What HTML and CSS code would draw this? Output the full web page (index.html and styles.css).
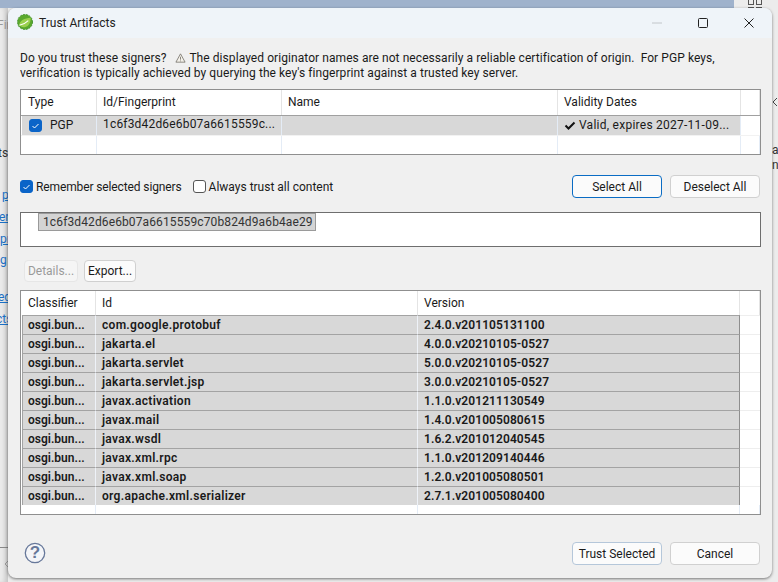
FILE: index.html
```html
<!DOCTYPE html>
<html lang="en">
<head>
<meta charset="utf-8">
<title>Trust Artifacts</title>
<link rel="stylesheet" href="styles.css">
</head>
<body>
<div class="desktop">
  <div class="topband"></div>
  <div class="topright"><span></span><span></span><span></span><span></span></div>
  <div class="behind">
    <span class="bg-text b1">Fin</span>
    <span class="bg-text b2">ts</span>
    <a class="bg-link l1">p</a><a class="bg-link l2">er</a><a class="bg-link l3">pr</a><a class="bg-link l4">g</a><a class="bg-link l5">ed</a><a class="bg-link l6">cts</a>
    <div class="behind-rule"></div>
    <svg class="chev-left" width="6" height="10" viewBox="0 0 6 10"><path d="M5 1L1 5l4 4" fill="none" stroke="#999"/></svg>
  </div>
  <div class="behind-right">
    <svg class="chev-right" width="6" height="10" viewBox="0 0 6 10"><path d="M5 1L1 5l4 4" fill="none" stroke="#444"/></svg>
    <span class="bg-text r1">a</span>
    <span class="bg-text r2">n</span>
  </div>
  <main class="dialog">
    <header class="titlebar">
      <svg class="logo" width="16" height="16" viewBox="0 0 17 17"><circle cx="8.5" cy="8.5" r="8" fill="#5aa82e"/><circle cx="8.5" cy="8.5" r="8" fill="none" stroke="#3d8f2a" stroke-width="1" stroke-dasharray="2 1.2"/><path d="M2.5 11.5C3 7 8 4.500 14.500 4c0 5-2 9.500-6.500 10C5.500 14.300 3.500 13 2.500 11.500Z" fill="#9ad04e"/><path d="M2.500 12C5.500 11.500 8.500 10.500 12 7" stroke="#fff" stroke-width="1.100" fill="none"/></svg>
      <span class="title">Trust Artifacts</span>
      <div class="winbtns">
        <svg width="12" height="12" viewBox="0 0 12 12"><path d="M1 6h10" stroke="#c2c6ca"/></svg>
        <svg width="12" height="12" viewBox="0 0 12 12"><rect x="1.500" y="1.500" width="9" height="9" rx="1" fill="none" stroke="#222"/></svg>
        <svg width="12" height="12" viewBox="0 0 12 12"><path d="M1.500 1.500l9 9M10.500 1.500l-9 9" stroke="#222"/></svg>
      </div>
    </header>
    <div class="content">
      <p class="intro">Do you trust these signers? <svg class="warn" width="11" height="10" viewBox="0 0 13 12"><path d="M6.500 1L12 11H1Z" fill="#f4f1ea" stroke="#77736c"/><path d="M6.500 4.500v3.500M6.500 9v1" stroke="#77736c"/></svg> The displayed originator names are not necessarily a reliable certification of origin.&nbsp; For PGP keys,<br>verification is typically achieved by querying the key's fingerprint against a trusted key server.</p>

      <section class="tbl signers">
        <div class="row head"><div class="cell">Type</div><div class="cell">Id/Fingerprint</div><div class="cell">Name</div><div class="cell">Validity Dates</div><div class="cell"></div></div>
        <div class="row sel">
          <div class="cell type"><span class="check on"><svg width="9" height="8" viewBox="0 0 9 8"><path d="M1.500 4l2 2 4-4" fill="none" stroke="#fff"/></svg></span>PGP</div>
          <div class="cell fpcell">1c6f3d42d6e6b07a6615559c...</div><div class="cell"></div>
          <div class="cell valid"><svg width="12" height="9" viewBox="0 0 12 9"><path d="M1.500 4.500l3 3 6-6" fill="none" stroke="#111" stroke-width="2"/></svg>Valid, expires 2027-11-09...</div>
          <div class="cell filler"></div>
        </div>
        <div class="row empty"><div class="cell"></div><div class="cell"></div><div class="cell"></div><div class="cell"></div><div class="cell"></div></div>
      </section>

      <div class="options">
        <label class="opt"><span class="check on"><svg width="9" height="8" viewBox="0 0 9 8"><path d="M1.500 4l2 2 4-4" fill="none" stroke="#fff"/></svg></span>Remember selected signers</label>
        <label class="opt"><span class="check"></span>Always trust all content</label>
        <div class="spacer"></div>
        <button class="btn default">Select All</button>
        <button class="btn">Deselect All</button>
      </div>

      <div class="fingerbox"><span class="fp">1c6f3d42d6e6b07a6615559c70b824d9a6b4ae29</span></div>

      <div class="actions">
        <button class="btn small disabled">Details...</button>
        <button class="btn small">Export...</button>
      </div>

      <section class="tbl artifacts">
        <div class="row head"><div class="cell">Classifier</div><div class="cell">Id</div><div class="cell">Version</div><div class="cell"></div></div>
        <div class="row sel"><div class="cell">osgi.bun...</div><div class="cell">com.google.protobuf</div><div class="cell">2.4.0.v201105131100</div><div class="cell filler"></div></div>
        <div class="row sel"><div class="cell">osgi.bun...</div><div class="cell">jakarta.el</div><div class="cell">4.0.0.v20210105-0527</div><div class="cell filler"></div></div>
        <div class="row sel"><div class="cell">osgi.bun...</div><div class="cell">jakarta.servlet</div><div class="cell">5.0.0.v20210105-0527</div><div class="cell filler"></div></div>
        <div class="row sel"><div class="cell">osgi.bun...</div><div class="cell">jakarta.servlet.jsp</div><div class="cell">3.0.0.v20210105-0527</div><div class="cell filler"></div></div>
        <div class="row sel"><div class="cell">osgi.bun...</div><div class="cell">javax.activation</div><div class="cell">1.1.0.v201211130549</div><div class="cell filler"></div></div>
        <div class="row sel"><div class="cell">osgi.bun...</div><div class="cell">javax.mail</div><div class="cell">1.4.0.v201005080615</div><div class="cell filler"></div></div>
        <div class="row sel"><div class="cell">osgi.bun...</div><div class="cell">javax.wsdl</div><div class="cell">1.6.2.v201012040545</div><div class="cell filler"></div></div>
        <div class="row sel"><div class="cell">osgi.bun...</div><div class="cell">javax.xml.rpc</div><div class="cell">1.1.0.v201209140446</div><div class="cell filler"></div></div>
        <div class="row sel"><div class="cell">osgi.bun...</div><div class="cell">javax.xml.soap</div><div class="cell">1.2.0.v201005080501</div><div class="cell filler"></div></div>
        <div class="row sel"><div class="cell">osgi.bun...</div><div class="cell">org.apache.xml.serializer</div><div class="cell">2.7.1.v201005080400</div><div class="cell filler"></div></div>
        <div class="row tail"><div class="cell"></div><div class="cell"></div><div class="cell"></div><div class="cell"></div></div>
      </section>

      <footer class="foot">
        <svg class="help" width="22" height="22" viewBox="0 0 22 22"><circle cx="11" cy="11" r="9.700" fill="#f4f5f8" stroke="#67789a" stroke-width="1.300"/><text x="11" y="16" text-anchor="middle" class="helpq">?</text></svg>
        <div class="spacer"></div>
        <button class="btn trust">Trust Selected</button>
        <button class="btn">Cancel</button>
      </footer>
    </div>
  </main>
</div>
</body>
</html>
```
FILE: styles.css
```css
* { box-sizing: border-box; }
html, body { margin: 0; padding: 0; }
body { width: 778px; height: 582px; overflow: hidden; font-family: Roboto, "Noto Sans", sans-serif; font-size: 12px; color: #1a1a1a; }
.desktop { position: relative; width: 778px; height: 582px; background: #ececec; overflow: hidden; }
.topband { position: absolute; left: 0; top: 0; width: 734px; height: 8px; background: #9fb2cc; }
.topright { position: absolute; left: 748px; top: -1px; display: grid; grid-template-columns: 6px 6px; gap: 2px; }
.topright span { width: 6px; height: 6px; border: 1px solid #555; }
.behind { position: absolute; left: 0; top: 8px; width: 8px; height: 574px; box-shadow: inset -5px 0 5px -2px #c4c4c4; overflow: hidden; }
.behind-right { position: absolute; left: 772px; top: 0; width: 6px; height: 582px; overflow: hidden; }
.bg-text, .bg-link { position: absolute; left: 0; font-size: 12px; white-space: nowrap; }
.bg-text { color: #333; }
.bg-link { color: #1a6fc4; text-decoration: underline; }
.b1 { top: 10px; left: -3px; color: #999; }
.b2 { top: 138px; left: -2px; }
.l1 { top: 180px; left: 2px; }
.l2 { top: 202px; left: -1px; }
.l3 { top: 224px; left: 0; }
.l4 { top: 245px; left: 0; }
.l5 { top: 282px; left: -2px; }
.l6 { top: 304px; left: -4px; }
.behind-rule { position: absolute; left: 0; top: 539px; width: 8px; height: 1px; background: #888; }
.chev-left { position: absolute; left: 4px; top: 551px; }
.chev-right { position: absolute; left: 0; top: 97px; }
.r1 { top: 143px; left: 0; }
.r2 { top: 158px; left: 0; }

.dialog { position: absolute; left: 8px; top: 8px; width: 764px; height: 570px; border-radius: 8px; background: #f0f0f0; box-shadow: 0 1px 3px rgba(0,0,0,.5); overflow: hidden; }
.titlebar { display: flex; align-items: center; height: 30px; background: #eff4f9; padding-left: 9px; }
.logo { flex: none; margin-bottom: 2px; }
.title { margin-left: 6px; color: #222; }
.winbtns { margin-left: auto; display: flex; gap: 34px; padding-right: 17px; align-items: center; }

.content { padding: 13px 11px 0 12px; }
.intro { margin: 0; line-height: 15px; height: 38px; white-space: nowrap; letter-spacing: .07px; }
.warn { vertical-align: -1px; margin: 0 1px 0 5px; }

.tbl { width: 741px; background: #fff; border: 1px solid #8f8f8f; }
.row { display: grid; }
.signers .row { grid-template-columns: 76px 185px 276px 183px 19px; }
.artifacts .row { grid-template-columns: 75px 322px 322px 20px; }
.cell { padding-left: 6px; white-space: nowrap; overflow: hidden; border-right: 1px solid #e4ecf6; line-height: 18px; }
.cell:first-child { padding-left: 7px; }
.head .cell { border-right-color: #e4e4e4; }
.signers { height: 66px; }
.signers .head { height: 25px; }
.signers .head .cell { line-height: 25px; }
.signers .sel { height: 20px; border-top: 1px solid #a0a0a0; }
.signers .sel .cell { line-height: 17px; background: #d8d8d8; }
.signers .sel .cell:first-child { border-left: 1px solid #fff; }
.signers .empty { height: 19px; border-top: 1px solid #f2f2f2; }
.cell.filler { background: #fff !important; border-right: 0; }
.type { display: flex; align-items: center; gap: 8px; }
.fpcell { letter-spacing: .18px; }
.valid { display: flex; align-items: center; gap: 3px; letter-spacing: .25px; }

.check { display: inline-flex; flex: none; align-items: center; justify-content: center; width: 13px; height: 13px; border: 1px solid #555; border-radius: 3px; background: #fff; }
.check.on { background: #0a64c8; border-color: #0a64c8; }

.options { display: flex; align-items: center; height: 23px; margin-top: 20px; }
.opt { display: flex; align-items: center; gap: 3px; margin-right: 11px; }
.opt:first-child { letter-spacing: -.12px; }
.spacer { flex: 1; }
.btn { font: inherit; color: #1a1a1a; width: 90px; height: 23px; padding: 0; background: #fbfbfb; border: 1px solid #d0d0d0; border-radius: 4px; }
.btn + .btn { margin-left: 8px; }
.btn.default { border-color: #0a6cc4; }
.btn.trust { border-color: #b5c7da; }
.options .btn:last-child, .foot .btn:last-child { margin-right: 1px; }

.fingerbox { width: 741px; height: 35px; margin-top: 14px; background: #fff; border: 1px solid #6e6e6e; padding-left: 17px; }
.fp { display: inline-block; height: 18px; line-height: 16px; padding: 0 2px 0 4px; background: #d4d4d4; border: 1px solid #9a9a9a; color: #333; letter-spacing: .12px; }

.actions { display: flex; height: 22px; margin-top: 13px; padding-left: 4px; }
.btn.small { width: 54px; height: 22px; padding-bottom: 1px; }
.btn.small + .btn.small { margin-left: 6px; width: 52px; }
.btn.disabled { color: #9a9a9a; background: #f5f5f5; border-color: #e6e6e6; }

.artifacts { height: 225px; margin-top: 8px; }
.artifacts .head { height: 24px; }
.artifacts .head .cell { line-height: 24px; }
.artifacts .sel { height: 19px; }
.artifacts .sel .cell { background: #d8d8d8; border-top: 1px solid #a3a3a3; border-right-color: #eef2f8; font-weight: 600; }
.artifacts .sel .cell:first-child { margin-left: 1px; border-left: 1px solid #a3a3a3; padding-left: 5px; }
.artifacts .sel .cell:nth-child(2) { letter-spacing: .3px; }
.artifacts .sel .cell:nth-child(3) { border-right: 1px solid #8e8e8e; letter-spacing: .08px; }
.artifacts .sel .cell.filler { border-top-color: #eee; }
.artifacts .tail { height: 9px; }

.foot { display: flex; align-items: center; height: 23px; margin-top: 27px; padding-left: 4px; }
.help { flex: none; margin-top: -2px; }
.helpq { font: bold 17px "Liberation Sans", sans-serif; fill: #67789a; }
```
